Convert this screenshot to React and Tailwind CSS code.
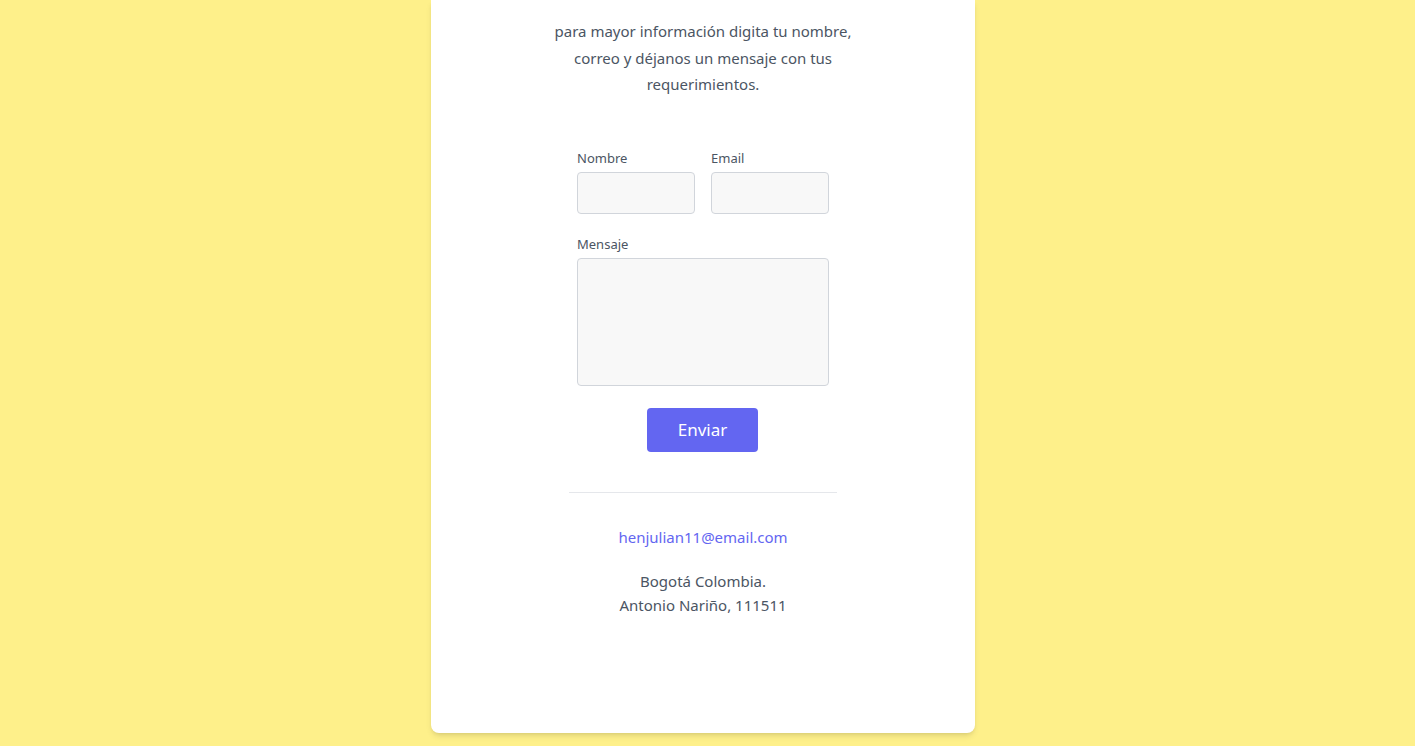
const App = () => {
  return (
    <div className="min-h-[746px] bg-[#fef08a] pb-[14px] font-['Noto_Sans',sans-serif]">
      <div className="ml-[431px] w-[544px] rounded-b-lg bg-white pt-[18px] pb-[116px] shadow-md flex flex-col items-center">
        <p className="w-[310px] text-center text-[15px] leading-[26.5px] text-[#4b5563]">
          para mayor información digita tu nombre, correo y déjanos un mensaje con tus requerimientos.
        </p>

        <form className="mt-[51px] flex w-[252px] flex-col" onSubmit={(e) => e.preventDefault()}>
          <div className="flex gap-4">
            <label className="flex w-[118px] flex-col">
              <span className="mb-[5px] text-[13px] leading-[18px] text-[#4b5563]">Nombre</span>
              <input type="text" className="h-[42px] w-full rounded border border-[#d1d5db] bg-[#f8f8f8]" />
            </label>
            <label className="flex w-[118px] flex-col">
              <span className="mb-[5px] text-[13px] leading-[18px] text-[#4b5563]">Email</span>
              <input type="email" className="h-[42px] w-full rounded border border-[#d1d5db] bg-[#f8f8f8]" />
            </label>
          </div>
          <label className="mt-[21px] flex flex-col">
            <span className="mb-[5px] text-[13px] leading-[18px] text-[#4b5563]">Mensaje</span>
            <textarea className="h-[128px] w-full resize-none rounded border border-[#d1d5db] bg-[#f8f8f8]" />
          </label>
          <button className="ml-[70px] mt-[22px] h-[44px] w-[111px] rounded bg-[#6366f1] text-[17px] text-white">
            Enviar
          </button>
        </form>

        <hr className="mt-[40px] w-[268px] border-t border-[#e5e7eb]" />

        <a href="#" className="mt-[32px] text-[15px] leading-[24px] text-[#6366f1]">
          henjulian11@email.com
        </a>
        <p className="mt-[20px] text-center text-[15px] leading-[24px] text-[#4b5563]">
          Bogotá Colombia.
          <br />
          Antonio Nariño, 111511
        </p>
      </div>
    </div>
  );
};

export default App;
